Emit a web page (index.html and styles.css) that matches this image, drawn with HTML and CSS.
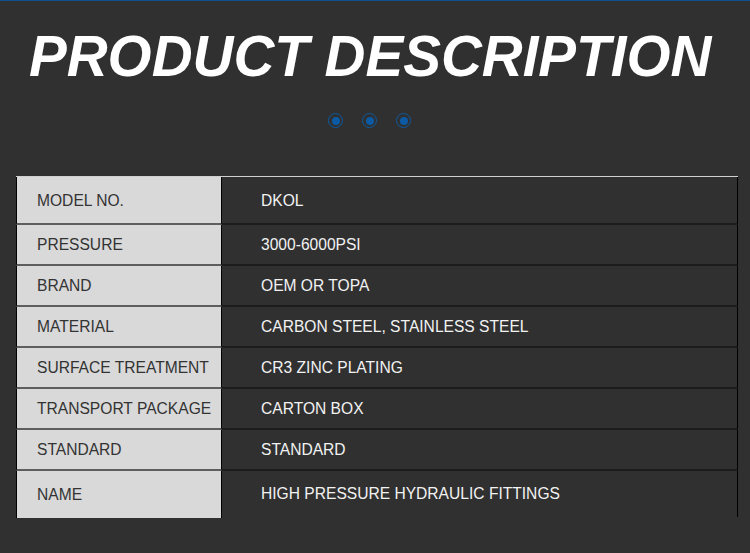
FILE: index.html
```html
<!DOCTYPE html>
<html>
<head>
<meta charset="utf-8">
<link rel="stylesheet" href="styles.css">
</head>
<body>
<div class="page">
  <h1 class="title">PRODUCT DESCRIPTION</h1>
  <div class="dots">
    <span class="dot"></span><span class="dot"></span><span class="dot"></span>
  </div>
  <div class="spec">
    <div class="row first"><div class="key">MODEL NO.</div><div class="val">DKOL</div></div>
    <div class="row"><div class="key">PRESSURE</div><div class="val">3000-6000PSI</div></div>
    <div class="row"><div class="key">BRAND</div><div class="val">OEM OR TOPA</div></div>
    <div class="row"><div class="key">MATERIAL</div><div class="val">CARBON STEEL, STAINLESS STEEL</div></div>
    <div class="row"><div class="key">SURFACE TREATMENT</div><div class="val">CR3 ZINC PLATING</div></div>
    <div class="row"><div class="key">TRANSPORT PACKAGE</div><div class="val">CARTON BOX</div></div>
    <div class="row"><div class="key">STANDARD</div><div class="val">STANDARD</div></div>
    <div class="row last"><div class="key">NAME</div><div class="val">HIGH PRESSURE HYDRAULIC FITTINGS</div></div>
  </div>
</div>
</body>
</html>
```
FILE: styles.css
```css
html, body {
  margin: 0;
  padding: 0;
  background: #303030;
}
.page {
  width: 750px;
  height: 553px;
  border-top: 1px solid #0d4f92;
  box-sizing: border-box;
  font-family: "Liberation Sans", Arial, sans-serif;
  overflow: hidden;
}
.title {
  margin: 0;
  padding: 20px 0 0 29px;
  height: 72px;
  font-size: 56.6px;
  line-height: 72px;
  font-weight: bold;
  font-style: italic;
  color: #ffffff;
  white-space: nowrap;
}
.dots {
  display: flex;
  justify-content: flex-start;
  gap: 19px;
  margin-top: 20px;
  padding-left: 328px;
}
.dot {
  width: 15px;
  height: 15px;
  box-sizing: border-box;
  border: 1.5px solid #0b5aa3;
  border-radius: 50%;
  display: flex;
  align-items: center;
  justify-content: center;
}
.dot::after {
  content: "";
  width: 8px;
  height: 8px;
  border-radius: 50%;
  background: #0b5aa3;
}
.spec {
  margin: 48px 0 0 16px;
  width: 722px;
  border-top: 1px solid #d0d0d0;
}
.row {
  display: grid;
  grid-template-columns: 206px 1fr;
  height: 41px;
  font-size: 15.6px;
}
.row.first { height: 48px; }
.row.last { height: 47px; }
.key {
  background: #d9d9d9;
  color: #333333;
  border-left: 1px solid #000;
  border-right: 1px solid #000;
  border-bottom: 2px solid #5e5e5e;
  padding-left: 20px;
  display: flex;
  align-items: center;
  white-space: nowrap;
}
.val {
  color: #f2f2f2;
  border-right: 1px solid #000;
  border-bottom: 2px solid #1c1c1c;
  padding-left: 39px;
  display: flex;
  align-items: center;
  white-space: nowrap;
}
.row.first .key, .row.first .val { padding-top: 2px; }
.row.last .key { border-bottom: none; }
.row.last .val { border-bottom: none; margin-bottom: 1px; }
```
